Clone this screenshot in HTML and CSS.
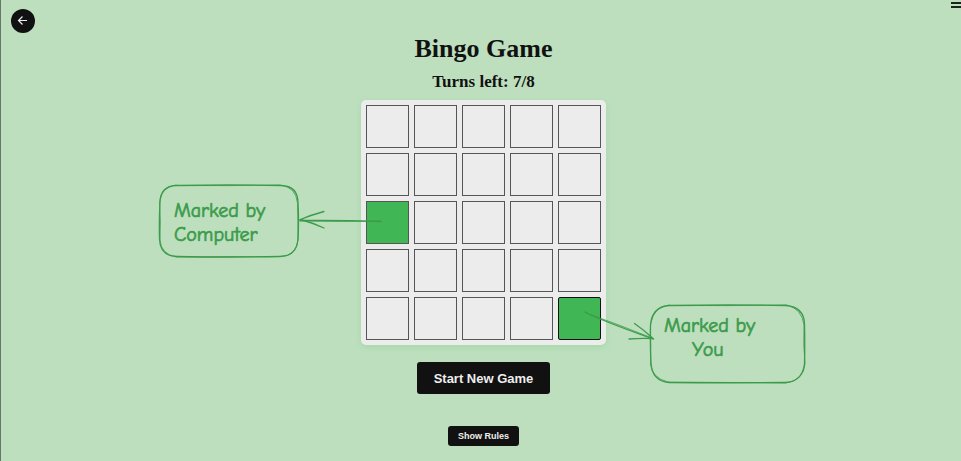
FILE: index.html
```html
<!DOCTYPE html>
<html lang="en">
<head>
<meta charset="utf-8">
<title>Bingo Game</title>
<link rel="stylesheet" href="styles.css">
</head>
<body>
<button class="back" type="button" aria-label="Back">
  <svg viewBox="0 0 12 12" width="12" height="12"><path d="M10 5.500H2M5.500 1.500L1.500 5.500l4 4"/></svg>
</button>
<button class="menu" type="button" aria-label="Menu"><span></span><span></span></button>
<main class="game">
  <h1>Bingo Game</h1>
  <h2>Turns left: 7/8</h2>
  <div class="stage">
    <div class="board">
      <i></i><i></i><i></i><i></i><i></i>
      <i></i><i></i><i></i><i></i><i></i>
      <i class="marked"></i><i></i><i></i><i></i><i></i>
      <i></i><i></i><i></i><i></i><i></i>
      <i></i><i></i><i></i><i></i><i class="marked own"></i>
    </div>
    <svg class="notes" viewBox="150 175 670 220" width="670" height="220">
      <g class="ink">
        <path d="M176 185.500Q230 184.500 281 185.500Q298 186 298 203Q299 222 298 239Q297 256 280 256.500Q230 257.500 177 256.500Q160 256 159.500 239Q159 220 160 202Q161 186 176 185.500"/>
        <path class="thin" d="M175 185.500Q230 186 280 185Q296 187 297.500 203Q298 222 298 240Q296 256 281 256.500L176 257Q161 254 160 240Q161 220 159.500 203Q160 187 176 185"/>
        <path d="M381 221.500Q340 220 300 220.500"/>
        <path class="thin" d="M380 221Q345 222 300 221"/>
        <path d="M324 211.500Q311 215 300.500 219.500Q313 223 324 228"/>
        <path d="M669 305.500Q730 304.500 786 305.500Q804 307 804.500 324Q805 345 804.500 364Q802 382 785 382.500Q730 383 669 382.500Q652 381 651 363Q650 345 650.500 325Q652 307 669 305.500"/>
        <path class="thin" d="M668 305.500Q730 306 787 305Q802 309 804 325Q803 345 805 364Q804 380 786 383L668 382Q652 378 650.500 364Q651 345 650.500 324Q654 306 669 305"/>
        <path d="M585 312Q595 318 653 339"/>
        <path class="thin" d="M586 313Q620 325 652 338"/>
        <path d="M634.500 323.500Q644 330 653 338.500Q640 338 629 339"/>
      </g>
      <text x="174" y="217">Marked by</text>
      <text x="174" y="241">Computer</text>
      <text x="664" y="332">Marked by</text>
      <text x="692" y="356">You</text>
    </svg>
  </div>
  <button class="start" type="button">Start New Game</button>
  <button class="rules" type="button">Show Rules</button>
</main>
</body>
</html>
```
FILE: styles.css
```css
* { box-sizing: border-box; }
body {
  margin: 0;
  min-height: 100vh;
  padding-left: 5px;
  border-left: 1px solid #66786a;
  background: #bddfbe;
  color: #111;
  font-family: "Liberation Serif", serif;
  overflow: hidden;
}
button {
  border: 0;
  padding: 0;
  background: #111;
  color: #eee;
  font-family: "Liberation Sans", sans-serif;
  font-weight: bold;
}
.back {
  position: absolute;
  top: 9px;
  left: 11px;
  width: 24px;
  height: 24px;
  border-radius: 50%;
  display: grid;
  place-items: center;
}
.back svg { fill: none; stroke: #eee; stroke-width: 1.2; }
.menu {
  position: absolute;
  top: 2px;
  right: 0;
  width: 10px;
  display: grid;
  gap: 2px;
  background: none;
}
.menu span { height: 2px; background: #1b231c; }
.game {
  display: flex;
  flex-direction: column;
  align-items: center;
  padding-top: 34px;
}
h1 { margin: 0; font-size: 26px; line-height: 30px; }
h2 { margin: 8px 0; font-size: 17px; line-height: 20px; }
.stage { position: relative; }
.board {
  display: grid;
  grid-template-columns: repeat(5, 43px);
  grid-auto-rows: 43px;
  gap: 5px;
  padding: 5px;
  border-radius: 5px;
  background: #ececec;
  box-shadow: 0 2px 6px #a5d8a7;
}
.board i { border: 1px solid #555; }
.board .marked { background: #40b654; }
.board .own { border-color: #111; border-radius: 2px; }
.notes {
  position: absolute;
  left: -211px;
  top: 75px;
  pointer-events: none;
}
.ink { fill: none; stroke: #3c9b4c; stroke-width: 1.3; stroke-linecap: round; }
.ink .thin { stroke-width: 0.8; }
.notes text {
  fill: #3c9b4c;
  stroke: #3c9b4c;
  stroke-width: 0.7;
  font-family: Virgil, "Comic Neue", "Comic Sans MS", cursive;
  font-size: 20px;
}
.start {
  margin-top: 17px;
  padding: 0 17px;
  height: 32px;
  border-radius: 3px;
  font-size: 13px;
}
.rules {
  margin-top: 32px;
  padding: 0 10px;
  height: 20px;
  border-radius: 3px;
  font-size: 9px;
}
```
